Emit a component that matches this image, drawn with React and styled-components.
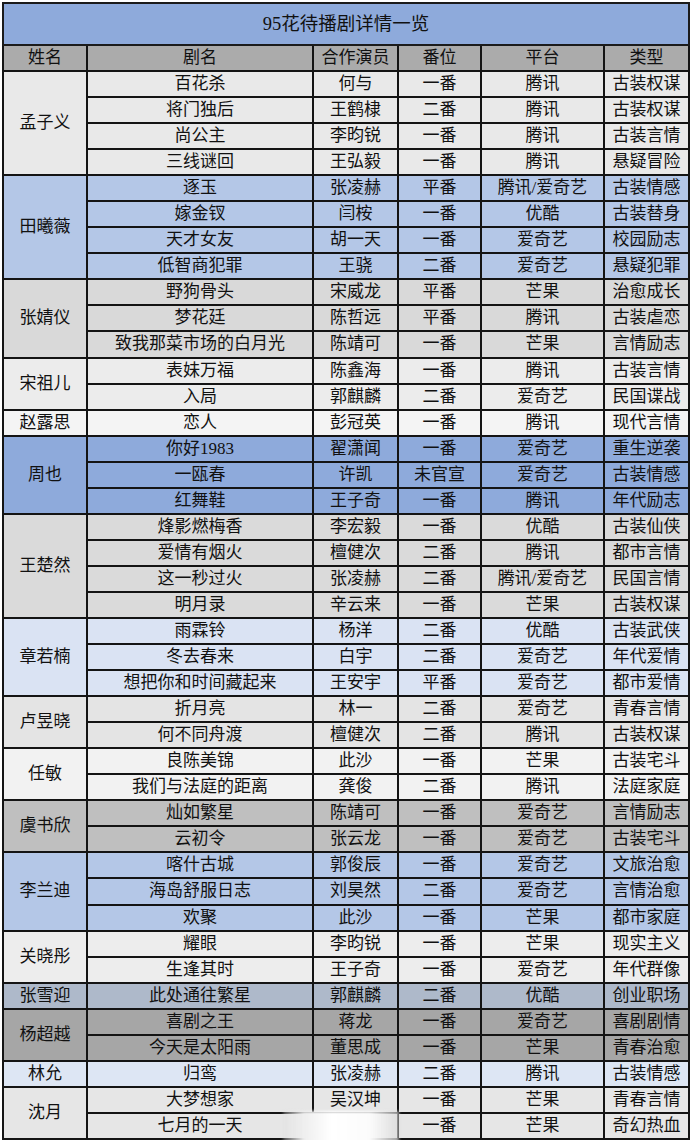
import React from 'react';
import styled, { createGlobalStyle } from 'styled-components';

const GlobalStyle = createGlobalStyle`
  html, body { margin: 0; padding: 0; background: #ffffff; }
  body { font-family: "Liberation Serif", "Noto Sans CJK SC", sans-serif; }
`;

const Page = styled.div`
  position: relative;
  padding: 2px 2px 0 2px;
  width: 686px;
`;

const Table = styled.table`
  width: 686px;
  border-collapse: collapse;
  table-layout: fixed;
  color: #111111;
  font-family: "Liberation Serif", "Noto Sans CJK SC", sans-serif;
  font-size: 17px;
`;

const TitleCell = styled.td`
  height: 40px;
  padding: 0;
  border: 2px solid #1b1b1b;
  background: #8eaadb;
  text-align: center;
  font-size: 18.5px;
  line-height: 24px;
  vertical-align: middle;
`;

const HeadCell = styled.td`
  height: 24px;
  padding: 0;
  border: 2px solid #141414;
  background: #ababab;
  text-align: center;
  vertical-align: middle;
  line-height: 20px;
`;

const Cell = styled.td`
  height: 24.05px;
  padding: 0;
  border: 2px solid #141414;
  background: ${({ bg }) => bg};
  text-align: center;
  vertical-align: middle;
  white-space: nowrap;
  line-height: 20px;
`;

// 底部水印模糊块
const Smudge = styled.div`
  position: absolute;
  left: 283px;
  top: 1111px;
  width: 116px;
  height: 32px;
  background: linear-gradient(
    to right,
    rgba(220, 220, 220, 0.3) 0%,
    #eeeeee 18%,
    #ffffff 42%,
    #fbfbfb 75%,
    rgba(215, 215, 215, 0.7) 100%
  );
  filter: blur(1.5px);
`;

const headers = ['姓名', '剧名', '合作演员', '番位', '平台', '类型'];
const widths = [84, 226, 85, 83, 123, 85];

const groups = [
  { name: '孟子义', bg: '#e9e9e9', rows: [
    ['百花杀', '何与', '一番', '腾讯', '古装权谋'],
    ['将门独后', '王鹤棣', '二番', '腾讯', '古装权谋'],
    ['尚公主', '李昀锐', '一番', '腾讯', '古装言情'],
    ['三线谜回', '王弘毅', '一番', '腾讯', '悬疑冒险'],
  ] },
  { name: '田曦薇', bg: '#b4c7e7', rows: [
    ['逐玉', '张凌赫', '平番', '腾讯/爱奇艺', '古装情感'],
    ['嫁金钗', '闫桉', '一番', '优酷', '古装替身'],
    ['天才女友', '胡一天', '一番', '爱奇艺', '校园励志'],
    ['低智商犯罪', '王骁', '二番', '爱奇艺', '悬疑犯罪'],
  ] },
  { name: '张婧仪', bg: '#d9d9d9', rows: [
    ['野狗骨头', '宋威龙', '平番', '芒果', '治愈成长'],
    ['梦花廷', '陈哲远', '平番', '腾讯', '古装虐恋'],
    ['致我那菜市场的白月光', '陈靖可', '一番', '芒果', '言情励志'],
  ] },
  { name: '宋祖儿', bg: '#ececec', rows: [
    ['表妹万福', '陈鑫海', '一番', '腾讯', '古装言情'],
    ['入局', '郭麒麟', '二番', '爱奇艺', '民国谍战'],
  ] },
  { name: '赵露思', bg: '#f4f4f4', rows: [
    ['恋人', '彭冠英', '一番', '腾讯', '现代言情'],
  ] },
  { name: '周也', bg: '#8eaadb', rows: [
    ['你好1983', '翟潇闻', '一番', '爱奇艺', '重生逆袭'],
    ['一瓯春', '许凯', '未官宣', '爱奇艺', '古装情感'],
    ['红舞鞋', '王子奇', '一番', '腾讯', '年代励志'],
  ] },
  { name: '王楚然', bg: '#dadada', rows: [
    ['烽影燃梅香', '李宏毅', '一番', '优酷', '古装仙侠'],
    ['爱情有烟火', '檀健次', '二番', '腾讯', '都市言情'],
    ['这一秒过火', '张凌赫', '二番', '腾讯/爱奇艺', '民国言情'],
    ['明月录', '辛云来', '一番', '芒果', '古装权谋'],
  ] },
  { name: '章若楠', bg: '#dae3f3', rows: [
    ['雨霖铃', '杨洋', '二番', '优酷', '古装武侠'],
    ['冬去春来', '白宇', '二番', '爱奇艺', '年代爱情'],
    ['想把你和时间藏起来', '王安宇', '平番', '爱奇艺', '都市爱情'],
  ] },
  { name: '卢昱晓', bg: '#e4e4e4', rows: [
    ['折月亮', '林一', '二番', '爱奇艺', '青春言情'],
    ['何不同舟渡', '檀健次', '二番', '腾讯', '古装权谋'],
  ] },
  { name: '任敏', bg: '#f2f2f2', rows: [
    ['良陈美锦', '此沙', '一番', '芒果', '古装宅斗'],
    ['我们与法庭的距离', '龚俊', '二番', '腾讯', '法庭家庭'],
  ] },
  { name: '虞书欣', bg: '#bfbfbf', rows: [
    ['灿如繁星', '陈靖可', '一番', '爱奇艺', '言情励志'],
    ['云初令', '张云龙', '一番', '爱奇艺', '古装宅斗'],
  ] },
  { name: '李兰迪', bg: '#b4c7e7', rows: [
    ['喀什古城', '郭俊辰', '一番', '爱奇艺', '文旅治愈'],
    ['海岛舒服日志', '刘昊然', '二番', '爱奇艺', '言情治愈'],
    ['欢聚', '此沙', '一番', '芒果', '都市家庭'],
  ] },
  { name: '关晓彤', bg: '#ededed', rows: [
    ['耀眼', '李昀锐', '一番', '芒果', '现实主义'],
    ['生逢其时', '王子奇', '一番', '爱奇艺', '年代群像'],
  ] },
  { name: '张雪迎', bg: '#aeb9ca', rows: [
    ['此处通往繁星', '郭麒麟', '二番', '优酷', '创业职场'],
  ] },
  { name: '杨超越', bg: '#a6a6a6', rows: [
    ['喜剧之王', '蒋龙', '一番', '爱奇艺', '喜剧剧情'],
    ['今天是太阳雨', '董思成', '一番', '芒果', '青春治愈'],
  ] },
  { name: '林允', bg: '#dde6f4', rows: [
    ['归鸾', '张凌赫', '二番', '腾讯', '古装情感'],
  ] },
  { name: '沈月', bg: '#e6e6e6', rows: [
    ['大梦想家', '吴汉坤', '一番', '芒果', '青春言情'],
    ['七月的一天', '', '一番', '芒果', '奇幻热血'],
  ] },
];

const GroupRows = ({ group }) =>
  group.rows.map((row, i) => (
    <tr key={group.name + i}>
      {i === 0 && (
        <Cell bg={group.bg} rowSpan={group.rows.length}>{group.name}</Cell>
      )}
      {row.map((v, j) => (
        <Cell key={j} bg={group.bg}>{v}</Cell>
      ))}
    </tr>
  ));

export default function App() {
  return (
    <Page>
      <GlobalStyle />
      <Table>
        <colgroup>
          {widths.map((w, i) => <col key={i} style={{ width: w }} />)}
        </colgroup>
        <tbody>
          <tr>
            <TitleCell colSpan={6}>95花待播剧详情一览</TitleCell>
          </tr>
          <tr>
            {headers.map((h) => <HeadCell key={h}>{h}</HeadCell>)}
          </tr>
          {groups.map((g) => <GroupRows key={g.name} group={g} />)}
        </tbody>
      </Table>
      <Smudge />
    </Page>
  );
}
